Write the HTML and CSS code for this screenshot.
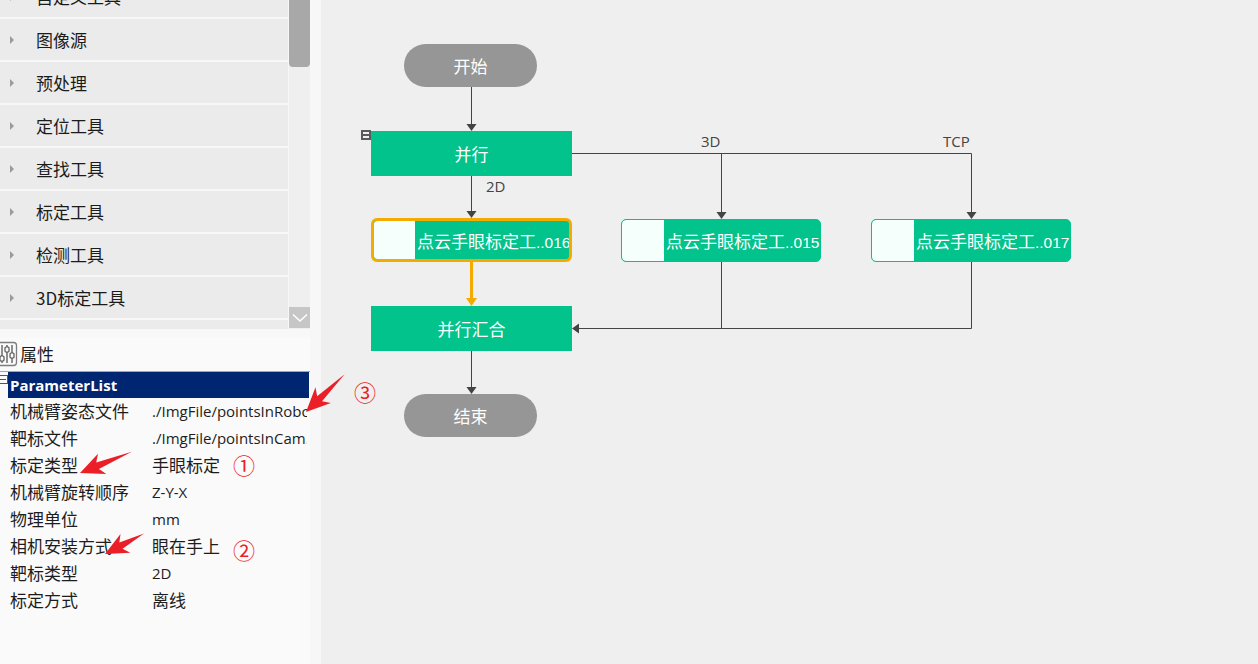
FILE: index.html
```html
<!DOCTYPE html>
<html lang="zh-CN">
<head>
<meta charset="utf-8">
<title>流程</title>
<link rel="stylesheet" href="styles.css">
</head>
<body>
<div class="app">
  <aside class="side">
    <section class="toolbox">
      <div class="tool-viewport">
        <ul class="tool-list">
          <li class="tool"><span class="tri"></span>自定义工具</li>
          <li class="tool"><span class="tri"></span>图像源</li>
          <li class="tool"><span class="tri"></span>预处理</li>
          <li class="tool"><span class="tri"></span>定位工具</li>
          <li class="tool"><span class="tri"></span>查找工具</li>
          <li class="tool"><span class="tri"></span>标定工具</li>
          <li class="tool"><span class="tri"></span>检测工具</li>
          <li class="tool"><span class="tri"></span>3D标定工具</li>
          <li class="tool"><span class="tri"></span>深度学习</li>
        </ul>
      </div>
      <div class="vscroll">
        <div class="thumb"></div>
        <div class="track"></div>
        <div class="down-btn">
          <svg width="16" height="10" viewBox="0 0 16 10"><path d="M1 1.5 L8 8 L15 1.5" fill="none" stroke="#fff" stroke-width="1.6"/></svg>
        </div>
      </div>
    </section>
    <div class="spacer"></div>
    <section class="props">
      <div class="props-head">
        <svg class="props-ico" width="18" height="26" viewBox="5 0 18 26">
          <rect x="1.5" y="1.5" width="20" height="23" rx="3" fill="none" stroke="#7d7d7d" stroke-width="1.3"/>
          <line x1="7" y1="4" x2="7" y2="22" stroke="#555" stroke-width="1.3"/>
          <line x1="12" y1="4" x2="12" y2="22" stroke="#555" stroke-width="1.3"/>
          <line x1="17" y1="4" x2="17" y2="22" stroke="#555" stroke-width="1.3"/>
          <rect x="5" y="15" width="4" height="5" rx="1" fill="#fafafa" stroke="#555" stroke-width="1.2"/>
          <rect x="10" y="6" width="4" height="5" rx="1" fill="#fafafa" stroke="#555" stroke-width="1.2"/>
          <rect x="15" y="12" width="4" height="5" rx="1" fill="#fafafa" stroke="#555" stroke-width="1.2"/>
        </svg>
        <span>属性</span>
      </div>
      <div class="grid">
        <div class="grid-title">
          <span class="collapse"></span>
          <div class="title-bar">ParameterList</div>
        </div>
        <div class="row"><span class="k">机械臂姿态文件</span><span class="v lat">./ImgFile/pointsInRobot.txt</span></div>
        <div class="row"><span class="k">靶标文件</span><span class="v lat">./ImgFile/pointsInCam.txt</span></div>
        <div class="row"><span class="k">标定类型</span><span class="v">手眼标定</span></div>
        <div class="row"><span class="k">机械臂旋转顺序</span><span class="v lat">Z-Y-X</span></div>
        <div class="row"><span class="k">物理单位</span><span class="v lat">mm</span></div>
        <div class="row"><span class="k">相机安装方式</span><span class="v">眼在手上</span></div>
        <div class="row"><span class="k">靶标类型</span><span class="v lat">2D</span></div>
        <div class="row"><span class="k">标定方式</span><span class="v">离线</span></div>
      </div>
    </section>
  </aside>
  <div class="gutter"></div>
  <main class="canvas">
    <svg class="wires" width="937" height="664" viewBox="0 0 937 664">
      <g stroke="#444" stroke-width="1" fill="none">
        <line x1="150.5" y1="87" x2="150.5" y2="125"/>
        <line x1="150.5" y1="176" x2="150.5" y2="212"/>
        <polyline points="251,153.5 650.5,153.5 650.5,212"/>
        <line x1="400.5" y1="153.5" x2="400.5" y2="212"/>
        <polyline points="400.5,262 400.5,328.5"/>
        <polyline points="650.5,262 650.5,328.5 258,328.5"/>
        <line x1="150.5" y1="351" x2="150.5" y2="388"/>
      </g>
      <g fill="#444">
        <polygon points="145.5,124 155.5,124 150.5,131"/>
        <polygon points="145.5,211 155.5,211 150.5,218"/>
        <polygon points="395.5,212 405.5,212 400.5,219"/>
        <polygon points="645.5,212 655.5,212 650.5,219"/>
        <polygon points="258,323.5 258,333.5 251,328.5"/>
        <polygon points="145.5,387 155.5,387 150.5,394"/>
      </g>
      <line x1="150.5" y1="262" x2="150.5" y2="299" stroke="#f5aa00" stroke-width="3"/>
      <polygon points="145,298 156,298 150.5,306" fill="#f5aa00"/>
    </svg>

    <div class="node pill start">开始</div>
    <span class="collapse-box"></span>
    <div class="node block par">并行</div>
    <span class="edge-label l2d">2D</span>
    <span class="edge-label l3d">3D</span>
    <span class="edge-label ltcp">TCP</span>
    <div class="node tool-node n016 selected"><span class="swatch"></span><span class="tn">点云手眼标定工<span class="suffix">..016</span></span></div>
    <div class="node tool-node n015"><span class="swatch"></span><span class="tn">点云手眼标定工<span class="suffix">..015</span></span></div>
    <div class="node tool-node n017"><span class="swatch"></span><span class="tn">点云手眼标定工<span class="suffix">..017</span></span></div>
    <div class="node block join">并行汇合</div>
    <div class="node pill end">结束</div>
  </main>
</div>

<svg class="annot" width="1258" height="664" viewBox="0 0 1258 664">
  <g fill="#ea1f27">
    <polygon points="-54,0 -19,-3.5 -24,-11 0,0 -24,11 -19,3.5" transform="translate(306,412) rotate(135.7)"/>
    <polygon points="-56,0 -19,-3.5 -24,-11 0,0 -24,11 -19,3.5" transform="translate(80,473) rotate(157.6)"/>
    <polygon points="-44,0 -18,-3.5 -23,-10.5 0,0 -23,10.5 -18,3.5" transform="translate(105,554) rotate(152.4)"/>
  </g>
</svg>
<span class="num n3">③</span>
<span class="num n1">①</span>
<span class="num n2">②</span>
</body>
</html>
```

FILE: styles.css
```css
* { box-sizing: border-box; margin: 0; padding: 0; }
html, body { width: 1258px; height: 664px; overflow: hidden; }
body {
  font-family: "Noto Sans CJK SC", "Noto Sans", sans-serif;
  color: #1b1b1b;
  background: #efefef;
  position: relative;
}
.app { display: flex; height: 664px; }

/* ---------- left side ---------- */
.side { width: 310px; flex: none; display: flex; flex-direction: column; background: #f8f8f8; }
.toolbox { height: 329px; flex: none; display: flex; }
.tool-viewport { width: 289px; overflow: hidden; background: #f7f7f7; }
.tool-list { list-style: none; margin-top: -24px; width: 288px; }
.tool {
  height: 41px; margin-bottom: 2px; background: #ebebeb;
  display: flex; align-items: center; padding-left: 10px;
  font-size: 17px; color: #1b1b1b; white-space: nowrap;
}
.tri {
  width: 0; height: 0; margin-right: 22px;
  border-left: 4px solid #9b9b9b;
  border-top: 4px solid transparent;
  border-bottom: 4px solid transparent;
}
.vscroll { width: 21px; display: flex; flex-direction: column; background: #efefef; }
.thumb { height: 67px; background: #a8a8a8; border-radius: 0 0 4px 4px; }
.track { flex: 1; }
.down-btn { height: 21px; margin-bottom: 1px; background: #c6c6c6; display: flex; align-items: center; justify-content: center; }

.spacer { height: 8px; flex: none; }
.props { flex: 1; background: #fafafa; overflow: hidden; }
.props-head {
  height: 35px; display: flex; align-items: center; gap: 2px;
  border-bottom: 1px solid #a6a6a6; font-size: 17px; padding-bottom: 1px;
}
.props-ico { flex: none; }
.grid { width: 309px; }
.grid-title { display: flex; height: 26px; }
.collapse {
  width: 8px; height: 9px; margin-top: 3px;
  border: 1px solid #555; border-left: none; position: relative;
}
.collapse::after { content: ""; position: absolute; left: 0; right: 1px; top: 3px; height: 1px; background: #555; }
.title-bar {
  flex: 1; background: #002571; color: #fff;
  font-family: "Open Sans", "Noto Sans", sans-serif; font-weight: 700; font-size: 15px;
  line-height: 26px; padding-left: 2px;
}
.row { display: flex; align-items: center; height: 27px; width: 307px; overflow: hidden; font-size: 17px; padding-bottom: 2px; }
.k { width: 152px; flex: none; padding-left: 10px; color: #1d1d1d; white-space: nowrap; }
.v { flex: 1; white-space: nowrap; overflow: hidden; color: #1d1d1d; font-size: 17px; }
.v.lat { font-family: "Open Sans", "Noto Sans", sans-serif; font-size: 15px; }

/* ---------- canvas ---------- */
.gutter { width: 11px; flex: none; background: #f7f7f7; }
.canvas { flex: 1; position: relative; background: #efefef; }
.wires { position: absolute; left: 0; top: 0; }

.node {
  position: absolute; display: flex; align-items: center; justify-content: center;
  color: #fff; font-size: 17px; white-space: nowrap;
}
.pill { background: #969696; border-radius: 22px; width: 133px; height: 43px; left: 83px; }
.start { top: 44px; }
.end { top: 394px; }
.block { background: #02c38b; width: 201px; height: 45px; left: 50px; }
.par { top: 131px; }
.join { top: 306px; }

.collapse-box {
  position: absolute; left: 40px; top: 130px; width: 10px; height: 10px;
  border: 2px solid #5a5a5a; background: #efefef;
}
.collapse-box::after { content: ""; position: absolute; left: 0; right: 0; top: 2px; height: 2px; background: #5a5a5a; }

.edge-label { position: absolute; font-size: 15px; color: #444; line-height: 16px; font-family: "Open Sans", "Noto Sans", sans-serif; }
.l2d { left: 165px; top: 178px; }
.l3d { left: 380px; top: 133px; }
.ltcp { left: 622px; top: 133px; }

.tool-node {
  justify-content: flex-start; background: #02c38b; border: 1px solid #02c38b;
  border-radius: 5px; height: 43px; width: 200px; top: 219px; overflow: hidden;
}
.swatch { width: 42px; height: 100%; background: #f5fffb; flex: none; border-radius: 4px 0 0 4px; }
.tn { padding-left: 2px; }
.suffix { font-family: "Liberation Sans", "Open Sans", sans-serif; font-size: 15.5px; }
.n016 { left: 50px; top: 218px; width: 201px; height: 44px; border: 3px solid #f5aa00; border-radius: 6px; }
.n016 .swatch { width: 41px; border-radius: 3px 0 0 3px; }
.n015 { left: 300px; }
.n017 { left: 550px; }

/* ---------- annotations ---------- */
.annot { position: absolute; left: 0; top: 0; pointer-events: none; }
.num { position: absolute; color: #ea1f27; font-size: 22px; line-height: 22px; }
.n3 { left: 354px; top: 380px; }
.n1 { left: 233px; top: 453px; }
.n2 { left: 233px; top: 538px; }
```
